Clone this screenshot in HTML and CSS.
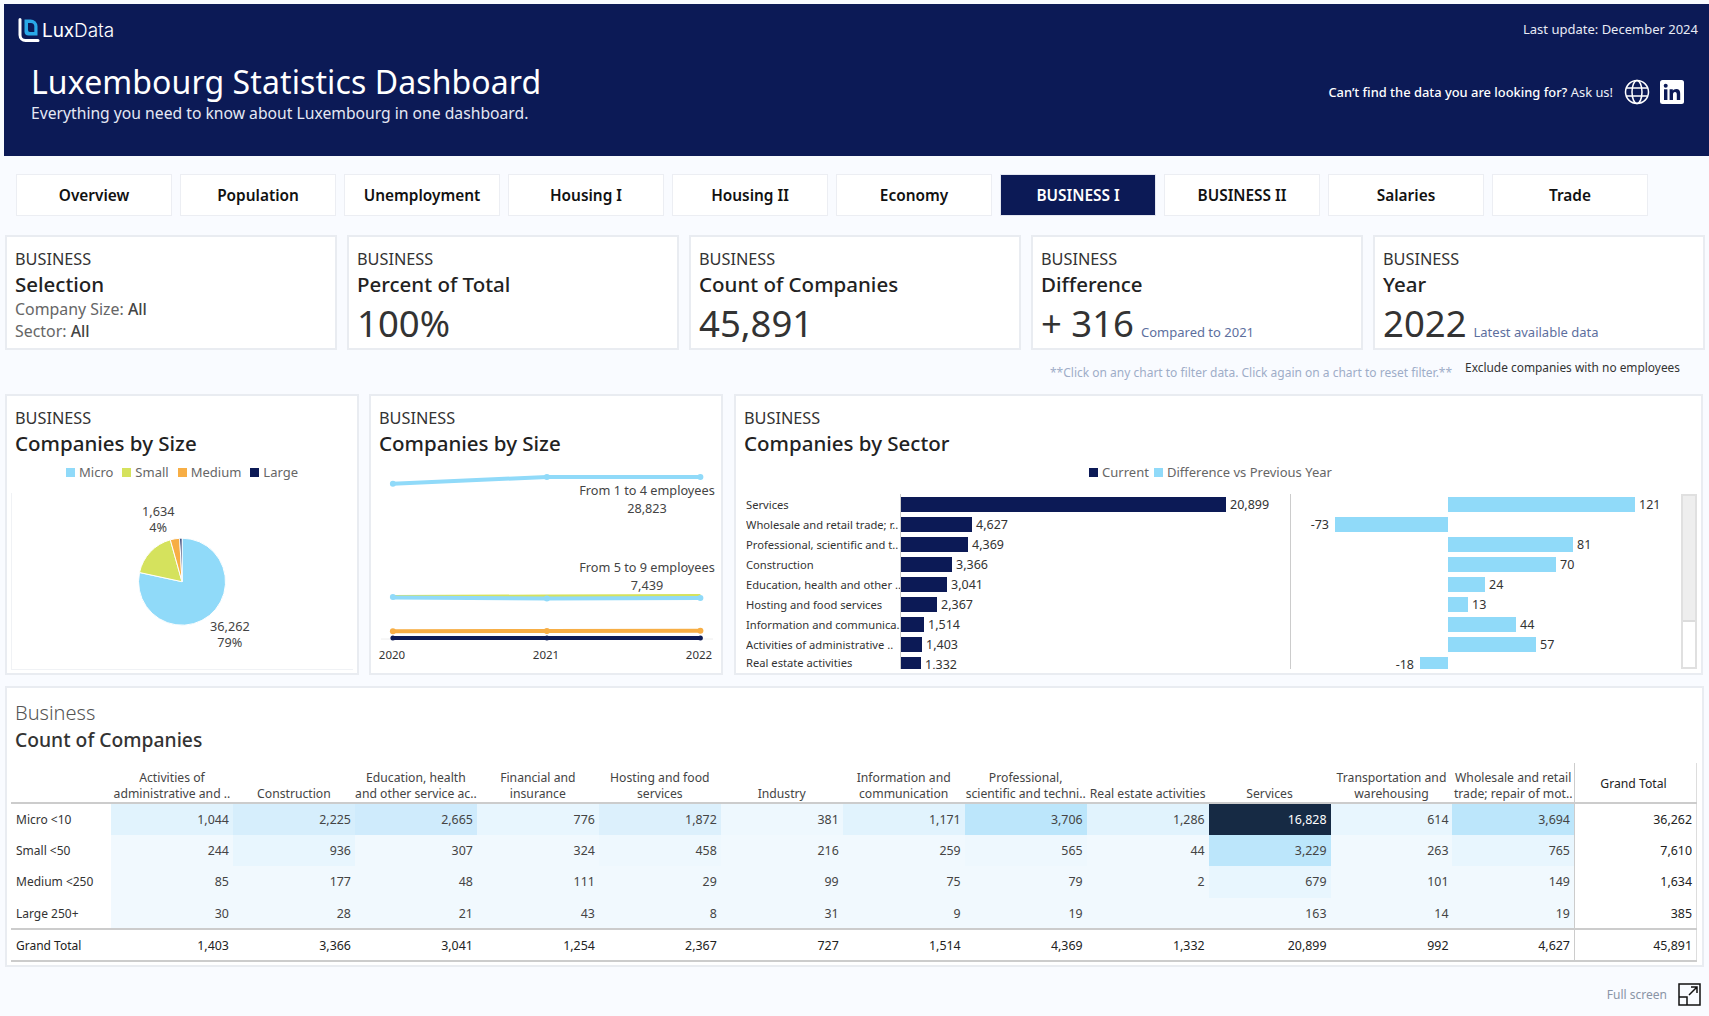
FILE: index.html
```html
<!DOCTYPE html>
<html lang="en">
<head>
<meta charset="utf-8">
<title>Luxembourg Statistics Dashboard</title>
<link rel="stylesheet" href="styles.css">
</head>
<body>
<header class="hero">
  <div class="hero-top">
    <div class="logo">
      <svg class="logo-mark" viewBox="0 0 22 24" width="22" height="24">
        <path d="M2 1.5V17a5.500 5.500 0 0 0 5.500 5.500H20" fill="none" stroke="#fff" stroke-width="3" stroke-linecap="round"/>
        <path d="M6.500 1.500h6a7 7 0 0 1 7 7v9h-9a4 4 0 0 1-4-4z" fill="#2aa9e8"/>
        <path d="M10 5h2.800a3.500 3.500 0 0 1 3.500 3.500V14h-4.300a2 2 0 0 1-2-2z" fill="#0c1a56"/>
      </svg>
      <span class="logo-text">Lux<span class="logo-light">Data</span></span>
    </div>
    <div class="last-update">Last update: December 2024</div>
  </div>
  <div class="hero-main">
    <div>
      <h1 class="hero-title">Luxembourg Statistics Dashboard</h1>
      <p class="hero-sub">Everything you need to know about Luxembourg in one dashboard.</p>
    </div>
    <div class="contact">
      <span class="contact-text"><strong>Can’t find the data you are looking for?</strong> Ask us!</span>
      <svg class="globe" viewBox="0 0 26 26" width="26" height="26" fill="none" stroke="#fff" stroke-width="1.500">
        <circle cx="13" cy="13" r="11.500"/>
        <ellipse cx="13" cy="13" rx="5" ry="11.500"/>
        <path d="M2.500 9h21M2.500 17h21"/>
      </svg>
      <svg class="linkedin" viewBox="0 0 24 24" width="24" height="24">
        <rect width="24" height="24" rx="2.500" fill="#fff"/>
        <rect x="4" y="9.300" width="3.400" height="10.700" fill="#0c1a56"/>
        <circle cx="5.700" cy="5.800" r="2" fill="#0c1a56"/>
        <path d="M9.600 9.300h3.200v1.500c.6-1 1.800-1.800 3.400-1.800 3 0 4 1.900 4 4.800V20h-3.400v-5.400c0-1.500-.4-2.600-1.800-2.600s-2 1.100-2 2.600V20H9.600z" fill="#0c1a56"/>
      </svg>
    </div>
  </div>
</header>

<nav class="tabs">
  <a class="tab">Overview</a>
  <a class="tab">Population</a>
  <a class="tab">Unemployment</a>
  <a class="tab">Housing I</a>
  <a class="tab">Housing II</a>
  <a class="tab">Economy</a>
  <a class="tab tab-active">BUSINESS I</a>
  <a class="tab">BUSINESS II</a>
  <a class="tab">Salaries</a>
  <a class="tab">Trade</a>
</nav>

<section class="kpis">
  <div class="card">
    <div class="eyebrow">BUSINESS</div>
    <div class="card-title">Selection</div>
    <div class="selection">Company Size: <b>All</b></div>
    <div class="selection">Sector: <b>All</b></div>
  </div>
  <div class="card">
    <div class="eyebrow">BUSINESS</div>
    <div class="card-title">Percent of Total</div>
    <div class="kpi-row"><span class="kpi">100%</span></div>
  </div>
  <div class="card">
    <div class="eyebrow">BUSINESS</div>
    <div class="card-title">Count of Companies</div>
    <div class="kpi-row"><span class="kpi">45,891</span></div>
  </div>
  <div class="card">
    <div class="eyebrow">BUSINESS</div>
    <div class="card-title">Difference</div>
    <div class="kpi-row"><span class="kpi">+ 316</span><span class="kpi-note">Compared to 2021</span></div>
  </div>
  <div class="card">
    <div class="eyebrow">BUSINESS</div>
    <div class="card-title">Year</div>
    <div class="kpi-row"><span class="kpi">2022</span><span class="kpi-note">Latest available data</span></div>
  </div>
</section>

<div class="hint-row">
  <span class="hint">**Click on any chart to filter data. Click again on a chart to reset filter.**</span>
  <span class="exclude">Exclude companies with no employees</span>
</div>

<section class="charts">
  <div class="panel panel-pie">
    <div class="panel-head">
      <div class="eyebrow">BUSINESS</div>
      <div class="panel-title">Companies by Size</div>
    </div>
    <div class="legend">
      <span class="legend-item"><i class="sw sw-micro"></i>Micro</span>
      <span class="legend-item"><i class="sw sw-small"></i>Small</span>
      <span class="legend-item"><i class="sw sw-medium"></i>Medium</span>
      <span class="legend-item"><i class="sw sw-large"></i>Large</span>
    </div>
    <div class="pie-box">
      <svg class="pie" viewBox="0 0 342 177" width="342" height="177">
        <g transform="translate(170 88.700)" stroke="#fff" stroke-width="1">
          <path d="M0 0V-43.500A43.500 43.500 0 1 1 -42.500 -9.200Z" fill="#90daf9"/>
          <path d="M0 0L-42.500 -9.200A43.500 43.500 0 0 1 -11.700 -41.900Z" fill="#d5e25d"/>
          <path d="M0 0L-11.700 -41.900A43.500 43.500 0 0 1 -2.300 -43.400Z" fill="#f7ae45"/>
          <path d="M0 0L-2.300 -43.400A43.500 43.500 0 0 1 0 -43.500Z" fill="#0c1a56"/>
        </g>
        <text class="chart-label" x="146.200" y="18">1,634</text>
        <text class="chart-label" x="146.200" y="34">4%</text>
        <text class="chart-label" x="217.900" y="133">36,262</text>
        <text class="chart-label" x="217.900" y="149">79%</text>
      </svg>
    </div>
  </div>

  <div class="panel panel-line">
    <div class="panel-head">
      <div class="eyebrow">BUSINESS</div>
      <div class="panel-title">Companies by Size</div>
    </div>
    <svg class="lines" viewBox="0 0 349 215" width="349" height="215">
      <line x1="10" y1="182" x2="342" y2="182" class="axis"/>
      <g transform="translate(1 1)">
        <g fill="none" stroke-width="4">
          <polyline points="20.900,25.700 174.900,19 328.400,19" stroke="#90daf9"/>
          <polyline points="20.900,139 174.900,138.500 328.400,138" stroke="#d5e25d"/>
          <polyline points="20.900,139.500 174.900,140.500 328.400,140" stroke="#90daf9"/>
          <polyline points="20.900,173.300 174.900,173 328.400,172.700" stroke="#f7ae45"/>
          <polyline points="20.900,180 174.900,180 328.400,180" stroke="#0c1a56"/>
        </g>
        <g fill="#90daf9">
          <circle cx="20.900" cy="25.700" r="3"/><circle cx="174.900" cy="19" r="3"/><circle cx="328.400" cy="19" r="3"/>
          <circle cx="20.900" cy="139" r="3"/><circle cx="174.900" cy="140.500" r="3"/><circle cx="328.400" cy="140" r="3"/>
        </g>
        <g fill="#f7ae45">
          <circle cx="20.900" cy="173.300" r="3"/><circle cx="174.900" cy="173" r="3"/><circle cx="328.400" cy="172.700" r="3"/>
        </g>
        <g fill="#0c1a56">
          <circle cx="20.900" cy="180" r="2.500"/><circle cx="174.900" cy="180" r="2.500"/><circle cx="328.400" cy="180" r="2.500"/>
        </g>
      </g>
      <text class="chart-label" x="276" y="32.700">From 1 to 4 employees</text>
      <text class="chart-label" x="276" y="50.700">28,823</text>
      <text class="chart-label" x="276" y="109.700">From 5 to 9 employees</text>
      <text class="chart-label" x="276" y="127.500">7,439</text>
      <text class="chart-year" x="21" y="197">2020</text>
      <text class="chart-year" x="175" y="197">2021</text>
      <text class="chart-year" x="328" y="197">2022</text>
    </svg>
  </div>

  <div class="panel panel-wide">
    <div class="panel-head">
      <div class="eyebrow">BUSINESS</div>
      <div class="panel-title">Companies by Sector</div>
    </div>
    <div class="legend legend-sector">
      <span class="legend-item"><i class="sw sw-large"></i>Current</span>
      <span class="legend-item"><i class="sw sw-micro"></i>Difference vs Previous Year</span>
    </div>
    <div class="sector">
      <div class="sector-labels">
        <div class="sector-row">Services</div>
        <div class="sector-row">Wholesale and retail trade; r..</div>
        <div class="sector-row">Professional, scientific and t..</div>
        <div class="sector-row">Construction</div>
        <div class="sector-row">Education, health and other ..</div>
        <div class="sector-row">Hosting and food services</div>
        <div class="sector-row">Information and communica..</div>
        <div class="sector-row">Activities of administrative ..</div>
        <div class="sector-row sector-row-last">Real estate activities</div>
      </div>
      <div class="sector-bars">
        <div class="sector-row"><i class="bar bar-navy" style="width:325px"></i><span class="val">20,899</span></div>
        <div class="sector-row"><i class="bar bar-navy" style="width:71px"></i><span class="val">4,627</span></div>
        <div class="sector-row"><i class="bar bar-navy" style="width:67px"></i><span class="val">4,369</span></div>
        <div class="sector-row"><i class="bar bar-navy" style="width:51px"></i><span class="val">3,366</span></div>
        <div class="sector-row"><i class="bar bar-navy" style="width:46px"></i><span class="val">3,041</span></div>
        <div class="sector-row"><i class="bar bar-navy" style="width:36px"></i><span class="val">2,367</span></div>
        <div class="sector-row"><i class="bar bar-navy" style="width:23px"></i><span class="val">1,514</span></div>
        <div class="sector-row"><i class="bar bar-navy" style="width:21px"></i><span class="val">1,403</span></div>
        <div class="sector-row"><i class="bar bar-navy" style="width:20px"></i><span class="val">1,332</span></div>
      </div>
      <div class="sector-diff">
        <div class="sector-row"><div class="neg"></div><div class="pos"><i class="bar bar-sky" style="width:187px"></i><span class="val">121</span></div></div>
        <div class="sector-row"><div class="neg"><span class="val">-73</span><i class="bar bar-sky" style="width:113px"></i></div><div class="pos"></div></div>
        <div class="sector-row"><div class="neg"></div><div class="pos"><i class="bar bar-sky" style="width:125px"></i><span class="val">81</span></div></div>
        <div class="sector-row"><div class="neg"></div><div class="pos"><i class="bar bar-sky" style="width:108px"></i><span class="val">70</span></div></div>
        <div class="sector-row"><div class="neg"></div><div class="pos"><i class="bar bar-sky" style="width:37px"></i><span class="val">24</span></div></div>
        <div class="sector-row"><div class="neg"></div><div class="pos"><i class="bar bar-sky" style="width:20px"></i><span class="val">13</span></div></div>
        <div class="sector-row"><div class="neg"></div><div class="pos"><i class="bar bar-sky" style="width:68px"></i><span class="val">44</span></div></div>
        <div class="sector-row"><div class="neg"></div><div class="pos"><i class="bar bar-sky" style="width:88px"></i><span class="val">57</span></div></div>
        <div class="sector-row"><div class="neg"><span class="val">-18</span><i class="bar bar-sky" style="width:28px"></i></div><div class="pos"></div></div>
      </div>
      <div class="scrollbar"><div class="scroll-thumb"></div></div>
    </div>
  </div>
</section>

<section class="panel table-panel">
  <div class="table-sub">Business</div>
  <div class="table-title">Count of Companies</div>
  <table class="crosstab">
    <colgroup><col class="col-first"></colgroup>
    <thead>
      <tr>
        <th class="corner"></th>
        <th>Activities of<br>administrative and ..</th>
        <th>Construction</th>
        <th>Education, health<br>and other service ac..</th>
        <th>Financial and<br>insurance</th>
        <th>Hosting and food<br>services</th>
        <th>Industry</th>
        <th>Information and<br>communication</th>
        <th>Professional,<br>scientific and techni..</th>
        <th>Real estate activities</th>
        <th>Services</th>
        <th>Transportation and<br>warehousing</th>
        <th>Wholesale and retail<br>trade; repair of mot..</th>
        <th class="gt gt-head">Grand Total</th>
      </tr>
    </thead>
    <tbody>
      <tr>
        <th>Micro &lt;10</th>
        <td class="h5">1,044</td><td class="h3">2,225</td><td class="h2">2,665</td><td class="h6">776</td><td class="h4">1,872</td><td class="h7">381</td><td class="h5">1,171</td><td class="h1">3,706</td><td class="h5">1,286</td><td class="h0">16,828</td><td class="h6">614</td><td class="h1">3,694</td><td class="gt">36,262</td>
      </tr>
      <tr>
        <th>Small &lt;50</th>
        <td class="h8">244</td><td class="h6">936</td><td class="h8">307</td><td class="h8">324</td><td class="h7">458</td><td class="h8">216</td><td class="h8">259</td><td class="h7">565</td><td class="h8">44</td><td class="h1">3,229</td><td class="h8">263</td><td class="h6">765</td><td class="gt">7,610</td>
      </tr>
      <tr>
        <th>Medium &lt;250</th>
        <td class="h8">85</td><td class="h8">177</td><td class="h8">48</td><td class="h8">111</td><td class="h8">29</td><td class="h8">99</td><td class="h8">75</td><td class="h8">79</td><td class="h8">2</td><td class="h6">679</td><td class="h8">101</td><td class="h8">149</td><td class="gt">1,634</td>
      </tr>
      <tr>
        <th>Large 250+</th>
        <td class="h8">30</td><td class="h8">28</td><td class="h8">21</td><td class="h8">43</td><td class="h8">8</td><td class="h8">31</td><td class="h8">9</td><td class="h8">19</td><td class="h8"></td><td class="h8">163</td><td class="h8">14</td><td class="h8">19</td><td class="gt">385</td>
      </tr>
    </tbody>
    <tfoot>
      <tr>
        <th>Grand Total</th>
        <td>1,403</td><td>3,366</td><td>3,041</td><td>1,254</td><td>2,367</td><td>727</td><td>1,514</td><td>4,369</td><td>1,332</td><td>20,899</td><td>992</td><td>4,627</td><td class="gt">45,891</td>
      </tr>
    </tfoot>
  </table>
</section>

<footer class="foot">
  <span class="foot-text">Full screen</span>
  <svg class="foot-icon" viewBox="0 0 23 23" width="23" height="23" fill="none" stroke="#111" stroke-width="1.500">
    <rect x="1" y="1" width="21" height="21"/>
    <path d="M1 14h8v8M11 12L19 4M13 4h6v6"/>
  </svg>
</footer>
</body>
</html>
```

FILE: styles.css
```css
* { box-sizing: border-box; }
html, body { margin: 0; padding: 0; }
body {
  width: 1709px;
  height: 1016px;
  overflow: hidden;
  background: #f9fbff;
  font-family: "Noto Sans", "Open Sans", sans-serif;
  color: #333;
}

/* Header */
.hero {
  margin: 4px 0 0 4px;
  height: 152px;
  background: #0c1a56;
  color: #fff;
  padding: 14px 11px 0 14px;
}
.hero-top { display: flex; justify-content: space-between; align-items: center; height: 24px; }
.logo { display: flex; align-items: center; gap: 2px; }
.logo-mark { display: block; }
.logo-text { font-family: "Inter", sans-serif; font-size: 19px; font-weight: 400; letter-spacing: -0.1px; }
.logo-light { font-weight: 300; }
.last-update { font-size: 13px; color: #e8ebf5; margin-top: -2px; }
.hero-main { display: flex; justify-content: space-between; align-items: center; margin: 19px 0 0 13px; padding-right: 14px; }
.hero-title { margin: 0; font-size: 32px; line-height: 42px; font-weight: 400; letter-spacing: 0.1px; }
.hero-sub { margin: 0; font-size: 15.700px; line-height: 20px; color: #e4e8f4; }
.contact { display: flex; align-items: center; }
.contact-text { font-size: 12.900px; margin-right: 11px; color: #eef0f8; }
.contact-text strong { font-weight: 500; color: #fff; }
.globe { display: block; margin-right: 10px; }
.linkedin { display: block; }

/* Tabs */
.tabs { display: flex; gap: 8px; margin: 18px 0 0 16px; }
.tab {
  width: 156px;
  height: 42px;
  display: flex;
  align-items: center;
  justify-content: center;
  background: #fff;
  border: 1px solid #eceef3;
  font-size: 15.400px;
  font-weight: 600;
  color: #111;
}
.tab-active { background: #0c1a56; color: #fff; border-color: #e4e7f0; }

/* Cards */
.kpis { display: flex; gap: 10px; margin: 19px 0 0 5px; }
.card {
  width: 332px;
  height: 115px;
  background: #fff;
  border: 2px solid #e9ecf1;
  padding: 12px 8px 0 8px;
}
.eyebrow { font-size: 16.300px; line-height: 20px; color: #333; }
.card-title { font-size: 20.500px; line-height: 28px; color: #222; margin-top: 1px; font-weight: 500; }
.selection { font-size: 15.900px; line-height: 22px; color: #666; }
.selection b { font-weight: 500; color: #444; }
.kpi-row { display: flex; align-items: baseline; gap: 7px; margin-top: 3px; }
.kpi { font-size: 36.500px; line-height: 44px; color: #333; }
.kpi-note { font-size: 13px; color: #5d6f9e; }

/* Hint row */
.hint-row { display: flex; height: 44px; margin-left: 1050px; gap: 13px; }
.hint { font-size: 12px; color: #9eadc8; margin-top: 14px; white-space: nowrap; }
.exclude { font-size: 11.900px; color: #333; margin-top: 9px; white-space: nowrap; }

/* Panels */
.charts { display: flex; gap: 10px; margin-left: 5px; }
.panel { background: #fff; border: 2px solid #e9ecf1; }
.panel-pie { width: 354px; height: 281px; }
.panel-line { width: 354px; height: 281px; margin-right: 1px; }
.panel-wide { width: 969px; height: 281px; }
.panel-head { padding: 12px 8px 0 8px; }
.panel-title { font-size: 20.500px; line-height: 28px; color: #222; margin-top: 1px; font-weight: 500; }
.legend { display: flex; justify-content: center; gap: 9px; margin-top: 5px; height: 20px; align-items: center; }
.legend-sector { padding-right: 16px; gap: 5px; }
.legend-item { display: flex; align-items: center; font-size: 13px; color: #666; gap: 4px; }
.sw { display: block; width: 9px; height: 9px; }
.sw-micro { background: #90daf9; }
.sw-small { background: #d5e25d; }
.sw-medium { background: #f7ae45; }
.sw-large { background: #0c1a56; }
.pie-box {
  margin: 11px 0 0 4px;
  width: 342px;
  height: 177px;
  border-left: 1px solid #f0f2f5;
  border-bottom: 1px solid #f0f2f5;
}
.pie, .lines { display: block; }
.chart-label { font-size: 12.700px; fill: #444; text-anchor: middle; dominant-baseline: central; }
.chart-year { font-size: 11.500px; fill: #333; text-anchor: middle; dominant-baseline: central; }
.axis { stroke: #eee; stroke-width: 1; }

/* Sector chart */
.sector { display: flex; height: 175px; margin: 12px 0 0 10px; overflow: hidden; }
.sector-labels, .sector-bars, .sector-diff { padding-top: 3px; }
.sector-labels { width: 154px; flex: none; }
.sector-bars { width: 390px; flex: none; border-left: 1px solid #ccc; }
.sector-diff { width: 390px; flex: none; border-left: 1px solid #ccc; }
.sector-row {
  display: flex;
  align-items: center;
  height: 15px;
  margin-bottom: 5px;
  font-size: 11.200px;
  white-space: nowrap;
  color: #333;
}
.sector-row-last { margin-top: -2px; }
.bar { display: block; height: 15px; flex: none; }
.bar-navy { background: #0c1a56; }
.bar-sky { background: #90daf9; }
.val { font-size: 12.500px; color: #333; margin: 0 4px; }
.neg { width: 157px; display: flex; justify-content: flex-end; align-items: center; }
.neg .val { margin-right: 6px; }
.pos { display: flex; align-items: center; flex: 1; }
.scrollbar { width: 16px; height: 175px; border: 2px solid #e0e0e0; background: #fff; flex: none; margin-left: 1px; }
.scroll-thumb { height: 126px; background: #eee; border-bottom: 2px solid #dcdcdc; }

/* Crosstab */
.table-panel { width: 1698.500px; height: 281px; margin: 11px 0 0 5px; padding: 11px 0 0 4px; }
.table-sub { font-size: 20px; line-height: 28px; color: #555; font-weight: 300; padding-left: 4px; }
.table-title { font-size: 19.300px; line-height: 26px; color: #333; font-weight: 500; padding-left: 4px; }
.crosstab { border-collapse: collapse; table-layout: fixed; width: 1686px; margin-top: 10px; font-size: 12.400px; color: #444; }
.col-first { width: 100px; }
.crosstab thead th {
  height: 40px;
  font-size: 12.200px;
  font-weight: 400;
  line-height: 16px;
  text-align: center;
  vertical-align: bottom;
  padding: 0;
  color: #444;
  white-space: nowrap;
  border-bottom: 2px solid #ccc;
}
.crosstab thead .gt-head { vertical-align: middle; padding-top: 2px; }
.crosstab tbody th, .crosstab tfoot th { text-align: left; font-size: 12px; font-weight: 400; padding-left: 5px; color: #333; white-space: nowrap; }
.crosstab td { height: 31.600px; text-align: right; padding: 0 4px 0 0; }
.crosstab tfoot td, .crosstab tfoot th { border-top: 2px solid #ccc; border-bottom: 2px solid #ccc; color: #222; }
.crosstab .gt { border-left: 1px solid #ccc; border-right: 1px solid #ddd; color: #222; padding-right: 4px; background: #fff; }
.h0 { background: #162a44; color: #fff; }
.h1 { background: #bce6fb; }
.h2 { background: #cfebfc; }
.h3 { background: #d6eefc; }
.h4 { background: #dcf0fc; }
.h5 { background: #e1f3fd; }
.h6 { background: #e8f6fe; }
.h7 { background: #eef8fe; }
.h8 { background: #f1f9fe; }

/* Footer */
.foot { display: flex; justify-content: flex-end; align-items: center; gap: 11px; margin-top: 16px; padding-right: 8px; }
.foot-text { font-size: 12px; color: #8a94a6; }
.foot-icon { display: block; }
```
